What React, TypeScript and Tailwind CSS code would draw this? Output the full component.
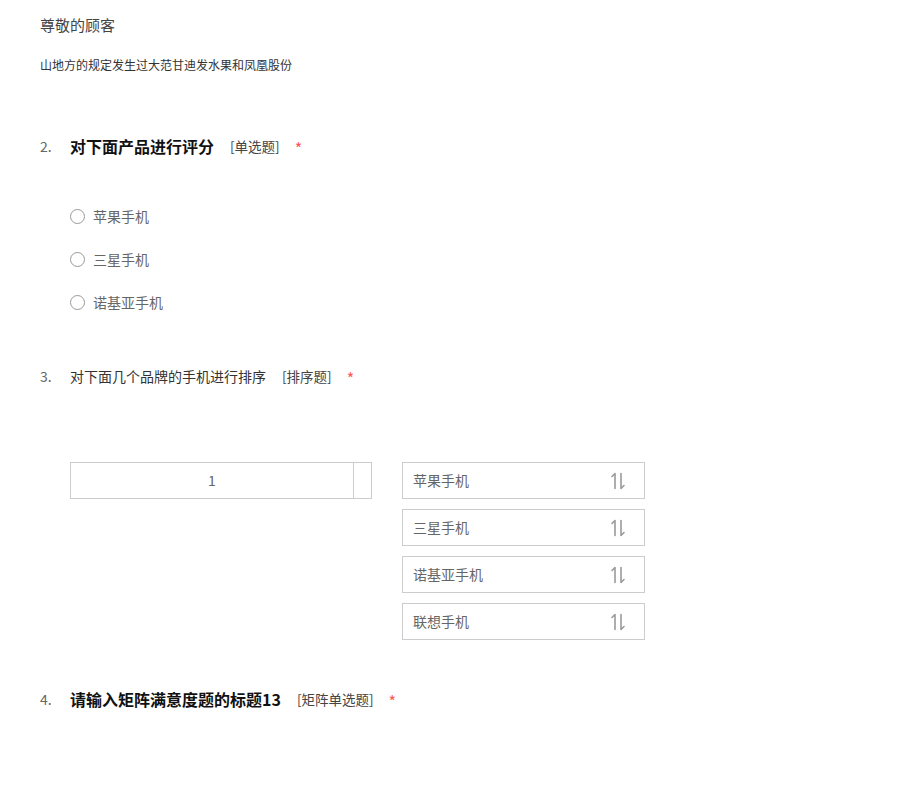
import React from "react";

const SortIcon = () => (
  <svg width="18" height="18" viewBox="0 0 18 18" fill="none" stroke="#9a9a9a" strokeWidth="1.6" strokeLinecap="round" strokeLinejoin="round">
    <path d="M6 1.5 V16.5 M6 1.5 L3 4.5" />
    <path d="M12 1.5 V16.5 M12 16.5 L15 13.5" />
  </svg>
);

const options = ["苹果手机", "三星手机", "诺基亚手机"];
const sortItems = ["苹果手机", "三星手机", "诺基亚手机", "联想手机"];

const QuestionTitle = ({
  num,
  title,
  tag,
  bold,
  tagGap,
}: {
  num: string;
  title: string;
  tag: string;
  bold?: boolean;
  tagGap: string;
}) => (
  <div className="flex items-center h-[20px] leading-[20px]">
    <span className="w-[30px] text-[14px] text-[#666]">{num}</span>
    <span className={bold ? "text-[16px] font-bold text-[#111]" : "text-[14px] text-[#333]"}>{title}</span>
    <span className={`${tagGap} text-[13.5px] text-[#444]`}>{tag}</span>
    <span className="ml-[15px] text-[16px] text-[#f55] pt-[3px]">*</span>
  </div>
);

export default function App() {
  return (
    <div className="w-[900px] h-[800px] bg-white pl-[40px] pt-[15px] font-['Noto_Sans_CJK_SC','Noto_Sans',sans-serif]">
      <div className="text-[15px] leading-[20px] text-[#444]">尊敬的顾客</div>
      <div className="mt-[20px] text-[12px] leading-[20px] text-[#333]">山地方的规定发生过大范甘迪发水果和凤凰股份</div>

      <div className="mt-[61px]">
        <QuestionTitle num="2." title="对下面产品进行评分" tag="[单选题]" bold tagGap="ml-[16px]" />
      </div>
      <div className="mt-[50px] ml-[30px] flex flex-col gap-[23px]">
        {options.map(o => (
          <label key={o} className="flex items-center h-[20px]">
            <span className="w-[15px] h-[15px] rounded-full border border-[#999] bg-white" />
            <span className="ml-[8px] text-[14px] leading-[20px] text-[#666]">{o}</span>
          </label>
        ))}
      </div>

      <div className="mt-[54px]">
        <QuestionTitle num="3." title="对下面几个品牌的手机进行排序" tag="[排序题]" tagGap="ml-[16px]" />
      </div>
      <div className="mt-[76px] ml-[30px] flex items-start gap-[30px]">
        <div className="w-[302px] h-[37px] border border-[#ccc] flex">
          <div className="flex-1 border-r border-[#ccc] flex items-center justify-center text-[14px] text-[#666]">1</div>
          <div className="w-[17px]" />
        </div>
        <div className="flex flex-col gap-[10px]">
          {sortItems.map(s => (
            <div key={s} className="w-[243px] h-[37px] border border-[#ccc] flex items-center justify-between pl-[10px] pr-[17px]">
              <span className="text-[14px] text-[#666]">{s}</span>
              <SortIcon />
            </div>
          ))}
        </div>
      </div>

      <div className="mt-[49px]">
        <QuestionTitle num="4." title="请输入矩阵满意度题的标题13" tag="[矩阵单选题]" bold tagGap="ml-[16px]" />
      </div>
    </div>
  );
}
